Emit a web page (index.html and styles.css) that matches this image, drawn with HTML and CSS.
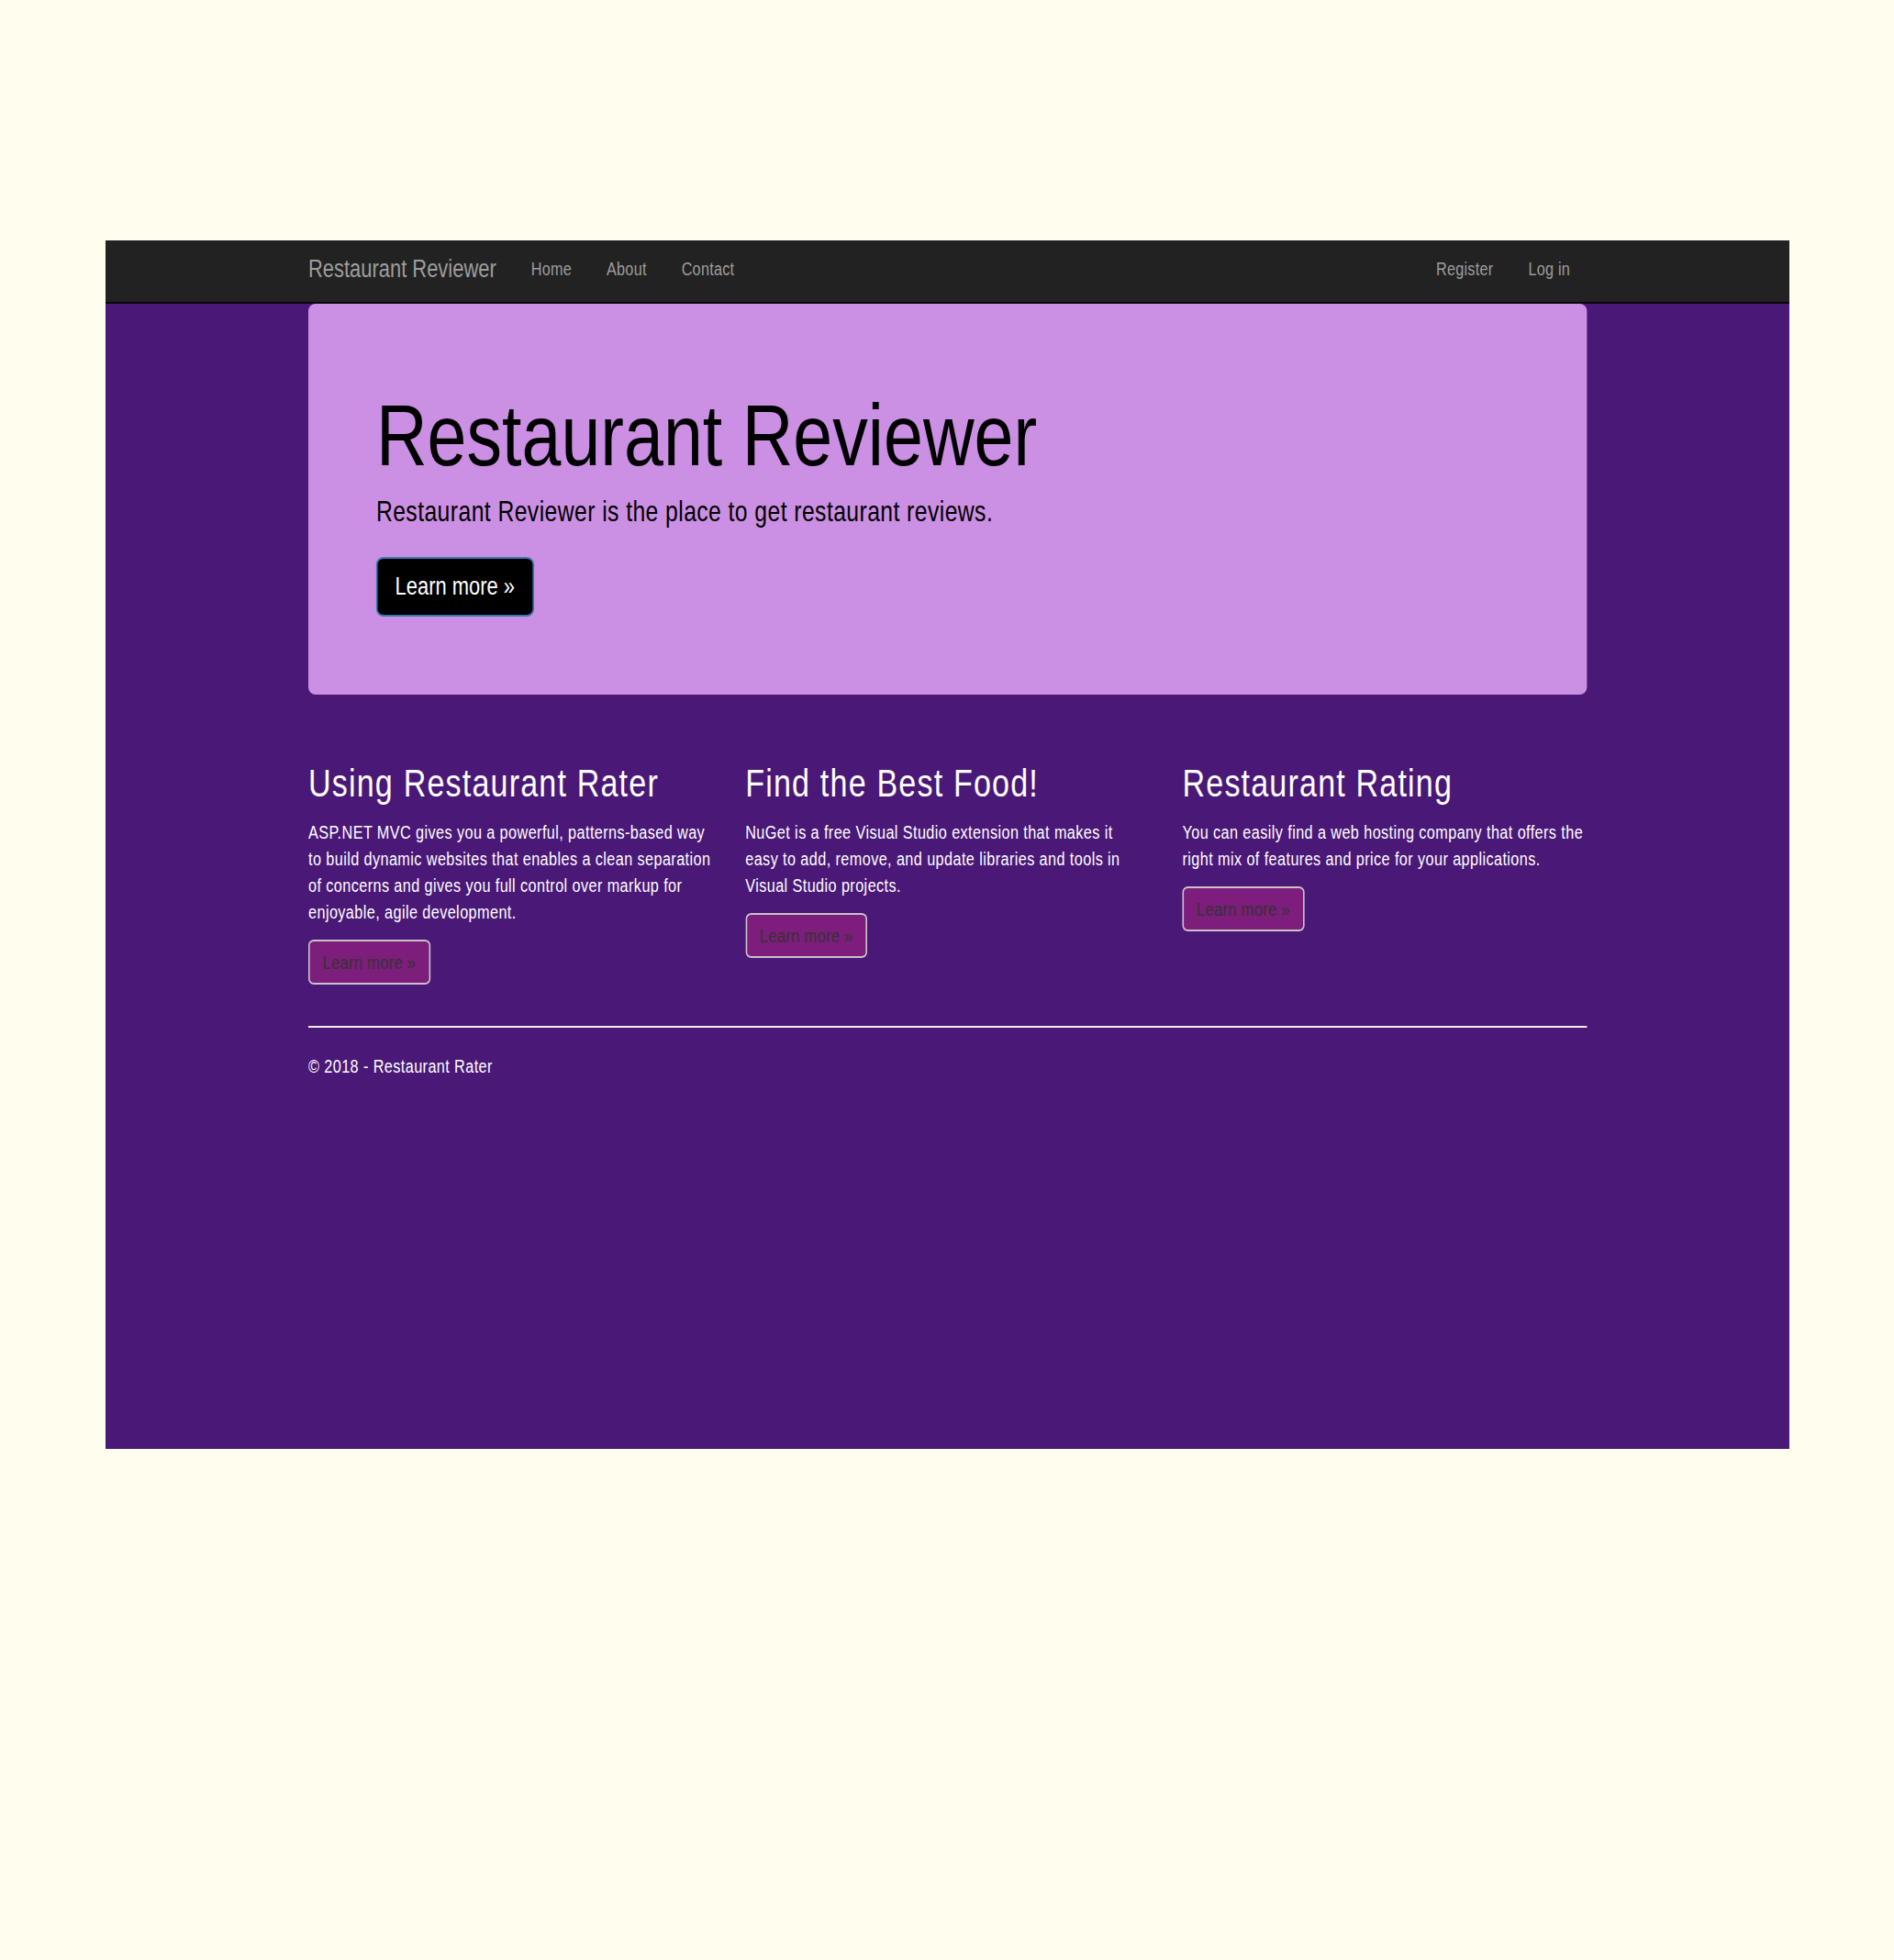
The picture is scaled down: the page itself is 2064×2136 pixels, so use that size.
FILE: index.html
```html
<!DOCTYPE html>
<html lang="en">
<head>
<meta charset="utf-8">
<title>Restaurant Reviewer</title>
<link rel="stylesheet" href="styles.css">
</head>
<body>
<div class="frame">
  <nav class="navbar">
    <div class="container nav-inner">
      <a class="brand" href="#">Restaurant Reviewer</a>
      <ul class="nav">
        <li><a href="#">Home</a></li>
        <li><a href="#">About</a></li>
        <li><a href="#">Contact</a></li>
      </ul>
      <ul class="nav nav-right">
        <li><a href="#">Register</a></li>
        <li><a href="#">Log in</a></li>
      </ul>
    </div>
  </nav>
  <div class="container body-content">
    <div class="jumbotron">
      <h1>Restaurant Reviewer</h1>
      <p class="lead">Restaurant Reviewer is the place to get restaurant reviews.</p>
      <p class="actions"><a class="btn-lg" href="#">Learn more &raquo;</a></p>
    </div>
    <div class="row">
      <div class="col">
        <h2>Using Restaurant Rater</h2>
        <p>ASP.NET MVC gives you a powerful, patterns-based way<br>to build dynamic websites that enables a clean separation<br>of concerns and gives you full control over markup for<br>enjoyable, agile development.</p>
        <p class="actions"><a class="btn-default" href="#">Learn more &raquo;</a></p>
      </div>
      <div class="col">
        <h2>Find the Best Food!</h2>
        <p>NuGet is a free Visual Studio extension that makes it<br>easy to add, remove, and update libraries and tools in<br>Visual Studio projects.</p>
        <p class="actions"><a class="btn-default" href="#">Learn more &raquo;</a></p>
      </div>
      <div class="col">
        <h2>Restaurant Rating</h2>
        <p>You can easily find a web hosting company that offers the<br>right mix of features and price for your applications.</p>
        <p class="actions"><a class="btn-default" href="#">Learn more &raquo;</a></p>
      </div>
    </div>
    <hr class="rule">
    <footer class="footer">
      <p>&copy; 2018 - Restaurant Rater</p>
    </footer>
  </div>
</div>
</body>
</html>
```

FILE: styles.css
```css
html, body {
  margin: 0;
  padding: 0;
  background: #fffdee;
}
body {
  font-family: "Liberation Sans", Arial, sans-serif;
  padding: 262px 0 0 115px;
  min-height: 2136px;
  box-sizing: border-box;
}
.frame {
  width: 1835px;
  height: 1317px;
  background: #4a1877;
  color: #fff;
}
/* the page content is drawn horizontally condensed */
.container {
  width: 1715.5px;
  margin-left: 221px;
  transform: scaleX(0.812);
  transform-origin: 0 0;
}
.navbar {
  background: #222222;
  border-bottom: 2px solid #080808;
  height: 67px;
}
.nav-inner {
  display: flex;
  align-items: flex-start;
  padding-top: 17px;
}
.brand {
  font-size: 27px;
  line-height: 28px;
  color: #9d9d9d;
  text-decoration: none;
  padding-right: 23.4px;
}
.nav {
  list-style: none;
  margin: 0;
  padding: 0;
  display: flex;
}
.nav a {
  display: block;
  padding: 0 23.4px;
  font-size: 20px;
  line-height: 28px;
  letter-spacing: 0.3px;
  color: #9d9d9d;
  text-decoration: none;
}
.nav-right {
  margin-left: auto;
}
.nav-right li:last-child a {
  padding-right: 22px;
}
.jumbotron {
  background: #cb8fe3;
  border-radius: 10px / 8px;
  padding: 91px 91px 85px;
  color: #000;
}
.jumbotron h1 {
  margin: 0 0 10px;
  font-size: 95px;
  line-height: 104px;
  font-weight: normal;
}
.lead {
  margin: 0 0 29px;
  font-size: 30.5px;
  line-height: 42px;
  letter-spacing: 0.5px;
}
.actions {
  display: flex;
  margin: 0;
}
.btn-lg {
  display: inline-block;
  background: #000;
  color: #fff;
  border: 2px solid #3b78ad;
  border-radius: 10px / 8px;
  padding: 13px 24px 13px 23.5px;
  font-size: 27px;
  line-height: 35px;
  text-decoration: none;
}
.row {
  display: grid;
  grid-template-columns: repeat(3, 548px);
  column-gap: 38.5px;
  align-items: start;
  margin-top: 74px;
}
.col h2 {
  margin: 0 0 16px;
  font-size: 42px;
  line-height: 46px;
  font-weight: normal;
  letter-spacing: 1.43px;
}
.col p {
  margin: 0 0 15px;
  font-size: 20px;
  line-height: 29px;
  letter-spacing: 0.5px;
}
.col .actions {
  margin-bottom: 15px;
}
.btn-default {
  display: inline-block;
  background: #7d1d7c;
  color: #333;
  border: 2px solid #c9c2c9;
  border-radius: 7.5px / 6px;
  padding: 8px 17px;
  font-size: 20.5px;
  line-height: 29px;
  letter-spacing: 0.3px;
  text-decoration: none;
}
.rule {
  margin: 30px 0 28px;
  border: 0;
  border-top: 2px solid #f2eef6;
  height: 0;
}
.footer p {
  margin: 0;
  font-size: 20px;
  line-height: 29px;
  letter-spacing: 0.5px;
}
```
